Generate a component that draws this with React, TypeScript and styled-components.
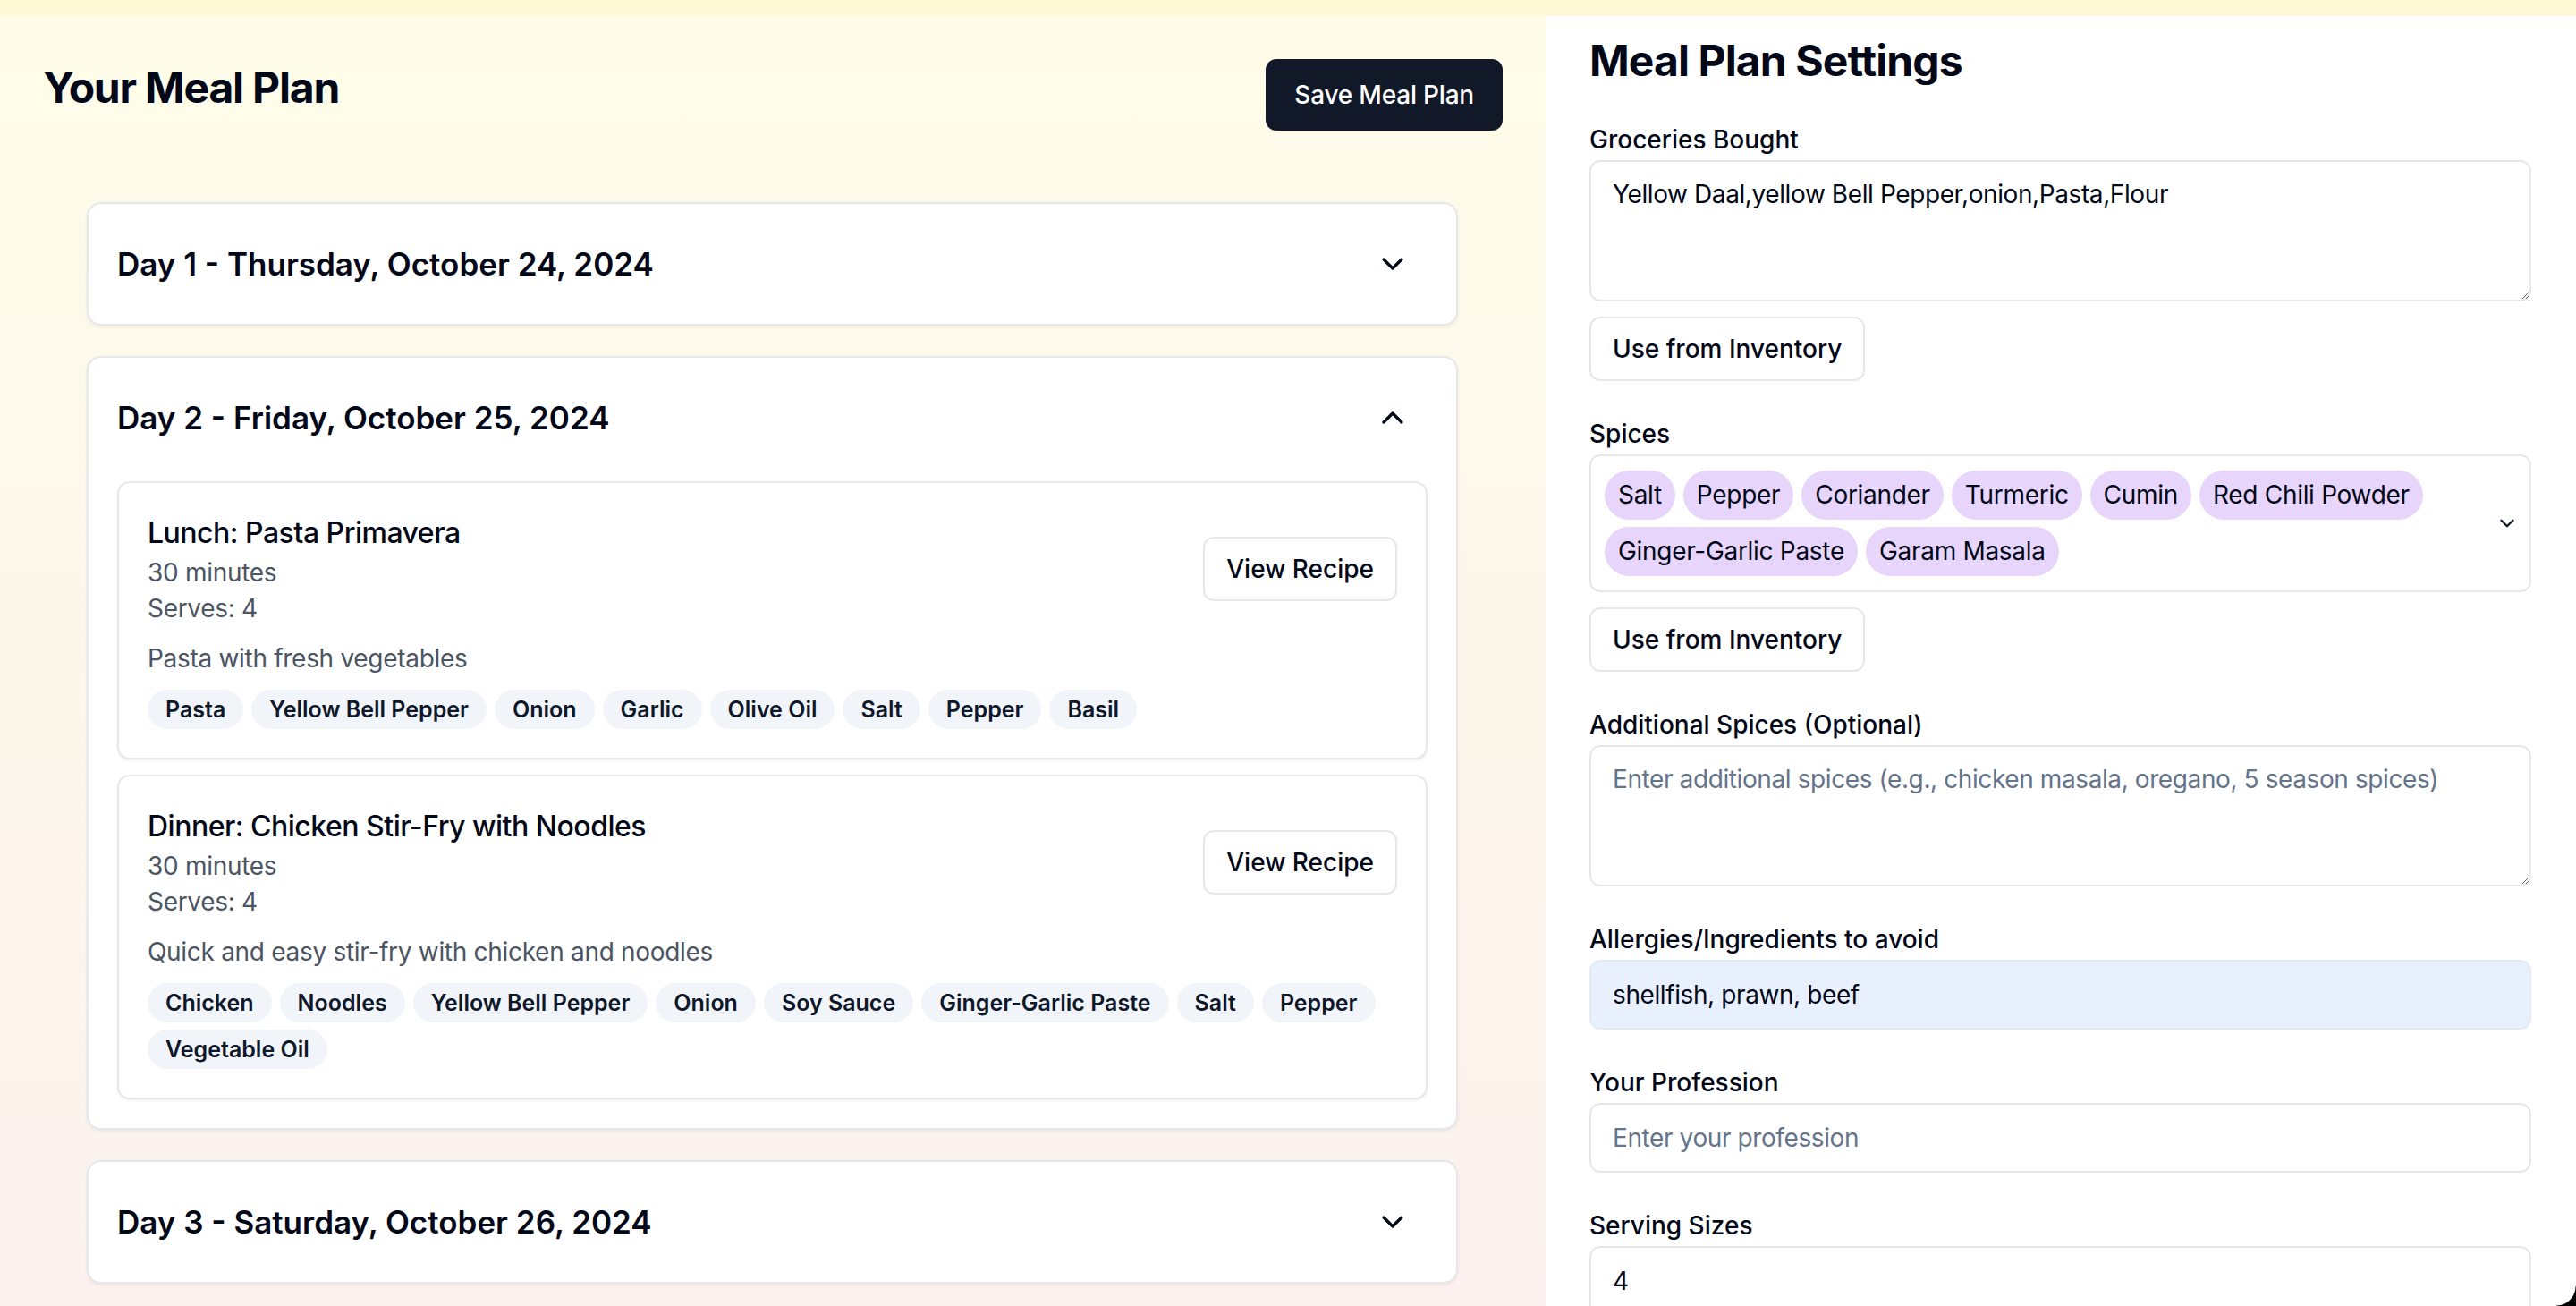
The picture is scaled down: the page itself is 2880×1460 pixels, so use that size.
import styled, { createGlobalStyle } from "styled-components";
import { ChevronDown, ChevronUp } from "lucide-react";

interface Meal {
  label: string;
  name: string;
  time: string;
  serves: number;
  description: string;
  ingredients: string[];
}

interface Day {
  title: string;
  open: boolean;
  meals: Meal[];
}

const GlobalStyle = createGlobalStyle`
  html, body {
    margin: 0;
    padding: 0;
    overflow: hidden;
  }
  body {
    font-family: Inter, "Noto Sans", "Liberation Sans", sans-serif;
    color: #020817;
  }
  * {
    box-sizing: border-box;
  }
`;

const Page = styled.div`
  display: flex;
  flex-direction: column;
  height: 1460px;
  background: #fef9d4;
`;

const TopStrip = styled.div`
  height: 18px;
  flex-shrink: 0;
`;

const Main = styled.div`
  display: flex;
  flex: 1;
  min-height: 0;
`;

const LeftPanel = styled.section`
  width: 1728px;
  flex-shrink: 0;
  padding: 48px 48px 0;
  background: linear-gradient(180deg, #fefce9 0%, #fdf6ec 60%, #fcf1ee 100%);
  overflow: hidden;
`;

const Header = styled.div`
  display: flex;
  justify-content: space-between;
  align-items: flex-start;
  margin-bottom: 32px;
`;

const Title = styled.h1`
  margin: 0;
  font-size: 48px;
  line-height: 64px;
  font-weight: 700;
  letter-spacing: -1.2px;
`;

const SaveButton = styled.button`
  height: 80px;
  padding: 0 32px;
  border: none;
  border-radius: 12px;
  background: #111827;
  color: #fff;
  font-family: inherit;
  font-size: 28px;
  font-weight: 500;
  letter-spacing: -0.2px;
`;

const DayList = styled.div`
  display: flex;
  flex-direction: column;
  gap: 34px;
  padding: 48px 50px 0 49px;
`;

const DayCard = styled.div`
  background: #fff;
  border: 2px solid #e5e7eb;
  border-radius: 16px;
  box-shadow: 0 2px 4px rgba(15, 23, 42, 0.06);
`;

const DayHeader = styled.div`
  display: flex;
  justify-content: space-between;
  align-items: center;
  height: 134px;
  padding: 0 51px 0 32px;
`;

const DayTitle = styled.h2`
  margin: 0;
  font-size: 35px;
  font-weight: 600;
`;

const DayBody = styled.div`
  display: flex;
  flex-direction: column;
  gap: 17px;
  padding: 4px 32px 32px;
`;

const MealCard = styled.div`
  border: 2px solid #e5e7eb;
  border-radius: 14px;
  padding: 32px;
  background: #fff;
  box-shadow: 0 2px 3px rgba(15, 23, 42, 0.05);
`;

const MealTop = styled.div`
  display: flex;
  justify-content: space-between;
  align-items: center;
`;

const MealName = styled.h3`
  margin: 0;
  font-size: 32px;
  line-height: 48px;
  font-weight: 500;
  letter-spacing: -0.5px;
`;

const MealMeta = styled.p`
  margin: 0;
  font-size: 28px;
  line-height: 40px;
  color: #4b5563;
  letter-spacing: -0.3px;
`;

const MealDesc = styled(MealMeta)`
  margin-top: 16px;
`;

const ChipRow = styled.div`
  display: flex;
  flex-wrap: wrap;
  gap: 8px 9px;
  margin-top: 15px;
`;

const Chip = styled.span`
  padding: 5px 20px;
  border-radius: 999px;
  background: #f1f5f9;
  color: #0f172a;
  font-size: 25px;
  line-height: 34px;
  font-weight: 600;
`;

const OutlineButton = styled.button`
  height: 72px;
  padding: 0 24px;
  border: 2px solid #e5e7eb;
  border-radius: 12px;
  background: #fff;
  color: #020817;
  font-family: inherit;
  font-size: 28px;
  font-weight: 500;
  flex-shrink: 0;
`;

const RightPanel = styled.aside`
  flex: 1;
  display: flex;
  flex-direction: column;
  gap: 47px;
  padding: 21px 50px 0 49px;
  background: #fff;
  overflow: hidden;
`;

const SettingsTitle = styled.h2`
  margin: 0;
  font-size: 48px;
  line-height: 58px;
  font-weight: 700;
  letter-spacing: -0.9px;
`;

const Field = styled.div`
  display: flex;
  flex-direction: column;
`;

const Label = styled.label`
  font-size: 28px;
  line-height: 24px;
  font-weight: 500;
  margin-bottom: 11px;
`;

const TextArea = styled.textarea`
  height: 158px;
  padding: 16px 24px;
  border: 2px solid #e5e7eb;
  border-radius: 12px;
  font-family: inherit;
  font-size: 28px;
  line-height: 40px;
  letter-spacing: -0.4px;
  color: #020817;
  resize: vertical;
  outline: none;

  &::placeholder {
    color: #64748b;
  }
`;

const Input = styled.input<{ $filled?: boolean }>`
  height: 78px;
  padding: 0 24px;
  border: 2px solid ${({ $filled }) => ($filled ? "#e3eaf7" : "#e5e7eb")};
  border-radius: 12px;
  background: ${({ $filled }) => ($filled ? "#e8f0fe" : "#fff")};
  font-family: inherit;
  font-size: 28px;
  letter-spacing: -0.4px;
  color: #020817;
  outline: none;

  &::placeholder {
    color: #64748b;
  }
`;

const FieldButton = styled(OutlineButton)`
  align-self: flex-start;
  margin-top: 17px;
`;

const SpiceBox = styled.div`
  display: flex;
  align-items: center;
  gap: 16px;
  min-height: 154px;
  padding: 15px 12px 15px 15px;
  border: 2px solid #e5e7eb;
  border-radius: 12px;
`;

const SpiceChips = styled.div`
  flex: 1;
  display: flex;
  flex-wrap: wrap;
  gap: 8px 9px;
`;

const SpiceChip = styled.span`
  padding: 7px 15px;
  border-radius: 999px;
  background: #e7d5fb;
  font-size: 28px;
  line-height: 41px;
  letter-spacing: -0.3px;
`;

const Corner = styled.div`
  position: fixed;
  right: 0;
  bottom: 0;
  width: 22px;
  height: 22px;
  background: radial-gradient(circle at 0 0, transparent 21px, #000 22px);
`;

const days: Day[] = [
  { title: "Day 1 - Thursday, October 24, 2024", open: false, meals: [] },
  {
    title: "Day 2 - Friday, October 25, 2024",
    open: true,
    meals: [
      {
        label: "Lunch",
        name: "Pasta Primavera",
        time: "30 minutes",
        serves: 4,
        description: "Pasta with fresh vegetables",
        ingredients: ["Pasta", "Yellow Bell Pepper", "Onion", "Garlic", "Olive Oil", "Salt", "Pepper", "Basil"],
      },
      {
        label: "Dinner",
        name: "Chicken Stir-Fry with Noodles",
        time: "30 minutes",
        serves: 4,
        description: "Quick and easy stir-fry with chicken and noodles",
        ingredients: [
          "Chicken",
          "Noodles",
          "Yellow Bell Pepper",
          "Onion",
          "Soy Sauce",
          "Ginger-Garlic Paste",
          "Salt",
          "Pepper",
          "Vegetable Oil",
        ],
      },
    ],
  },
  { title: "Day 3 - Saturday, October 26, 2024", open: false, meals: [] },
];

const spices = ["Salt", "Pepper", "Coriander", "Turmeric", "Cumin", "Red Chili Powder", "Ginger-Garlic Paste", "Garam Masala"];

const App = () => {
  return (
    <Page>
      <GlobalStyle />
      <TopStrip />
      <Main>
        <LeftPanel>
          <Header>
            <Title>Your Meal Plan</Title>
            <SaveButton>Save Meal Plan</SaveButton>
          </Header>
          <DayList>
            {days.map((day) => (
              <DayCard key={day.title}>
                <DayHeader>
                  <DayTitle>{day.title}</DayTitle>
                  {day.open ? <ChevronUp size={40} strokeWidth={2} /> : <ChevronDown size={40} strokeWidth={2} />}
                </DayHeader>
                {day.open && (
                  <DayBody>
                    {day.meals.map((meal) => (
                      <MealCard key={meal.name}>
                        <MealTop>
                          <div>
                            <MealName>
                              {meal.label}: {meal.name}
                            </MealName>
                            <MealMeta>{meal.time}</MealMeta>
                            <MealMeta>Serves: {meal.serves}</MealMeta>
                          </div>
                          <OutlineButton>View Recipe</OutlineButton>
                        </MealTop>
                        <MealDesc>{meal.description}</MealDesc>
                        <ChipRow>
                          {meal.ingredients.map((item) => (
                            <Chip key={item}>{item}</Chip>
                          ))}
                        </ChipRow>
                      </MealCard>
                    ))}
                  </DayBody>
                )}
              </DayCard>
            ))}
          </DayList>
        </LeftPanel>

        <RightPanel>
          <SettingsTitle>Meal Plan Settings</SettingsTitle>

          <Field>
            <Label>Groceries Bought</Label>
            <TextArea defaultValue="Yellow Daal,yellow Bell Pepper,onion,Pasta,Flour" />
            <FieldButton>Use from Inventory</FieldButton>
          </Field>

          <Field>
            <Label>Spices</Label>
            <SpiceBox>
              <SpiceChips>
                {spices.map((s) => (
                  <SpiceChip key={s}>{s}</SpiceChip>
                ))}
              </SpiceChips>
              <ChevronDown size={26} strokeWidth={2.2} color="#0f172a" />
            </SpiceBox>
            <FieldButton>Use from Inventory</FieldButton>
          </Field>

          <Field>
            <Label>Additional Spices (Optional)</Label>
            <TextArea placeholder="Enter additional spices (e.g., chicken masala, oregano, 5 season spices)" />
          </Field>

          <Field>
            <Label>Allergies/Ingredients to avoid</Label>
            <Input $filled defaultValue="shellfish, prawn, beef" />
          </Field>

          <Field>
            <Label>Your Profession</Label>
            <Input placeholder="Enter your profession" />
          </Field>

          <Field>
            <Label>Serving Sizes</Label>
            <Input defaultValue="4" />
          </Field>
        </RightPanel>
      </Main>
      <Corner />
    </Page>
  );
};

export default App;
